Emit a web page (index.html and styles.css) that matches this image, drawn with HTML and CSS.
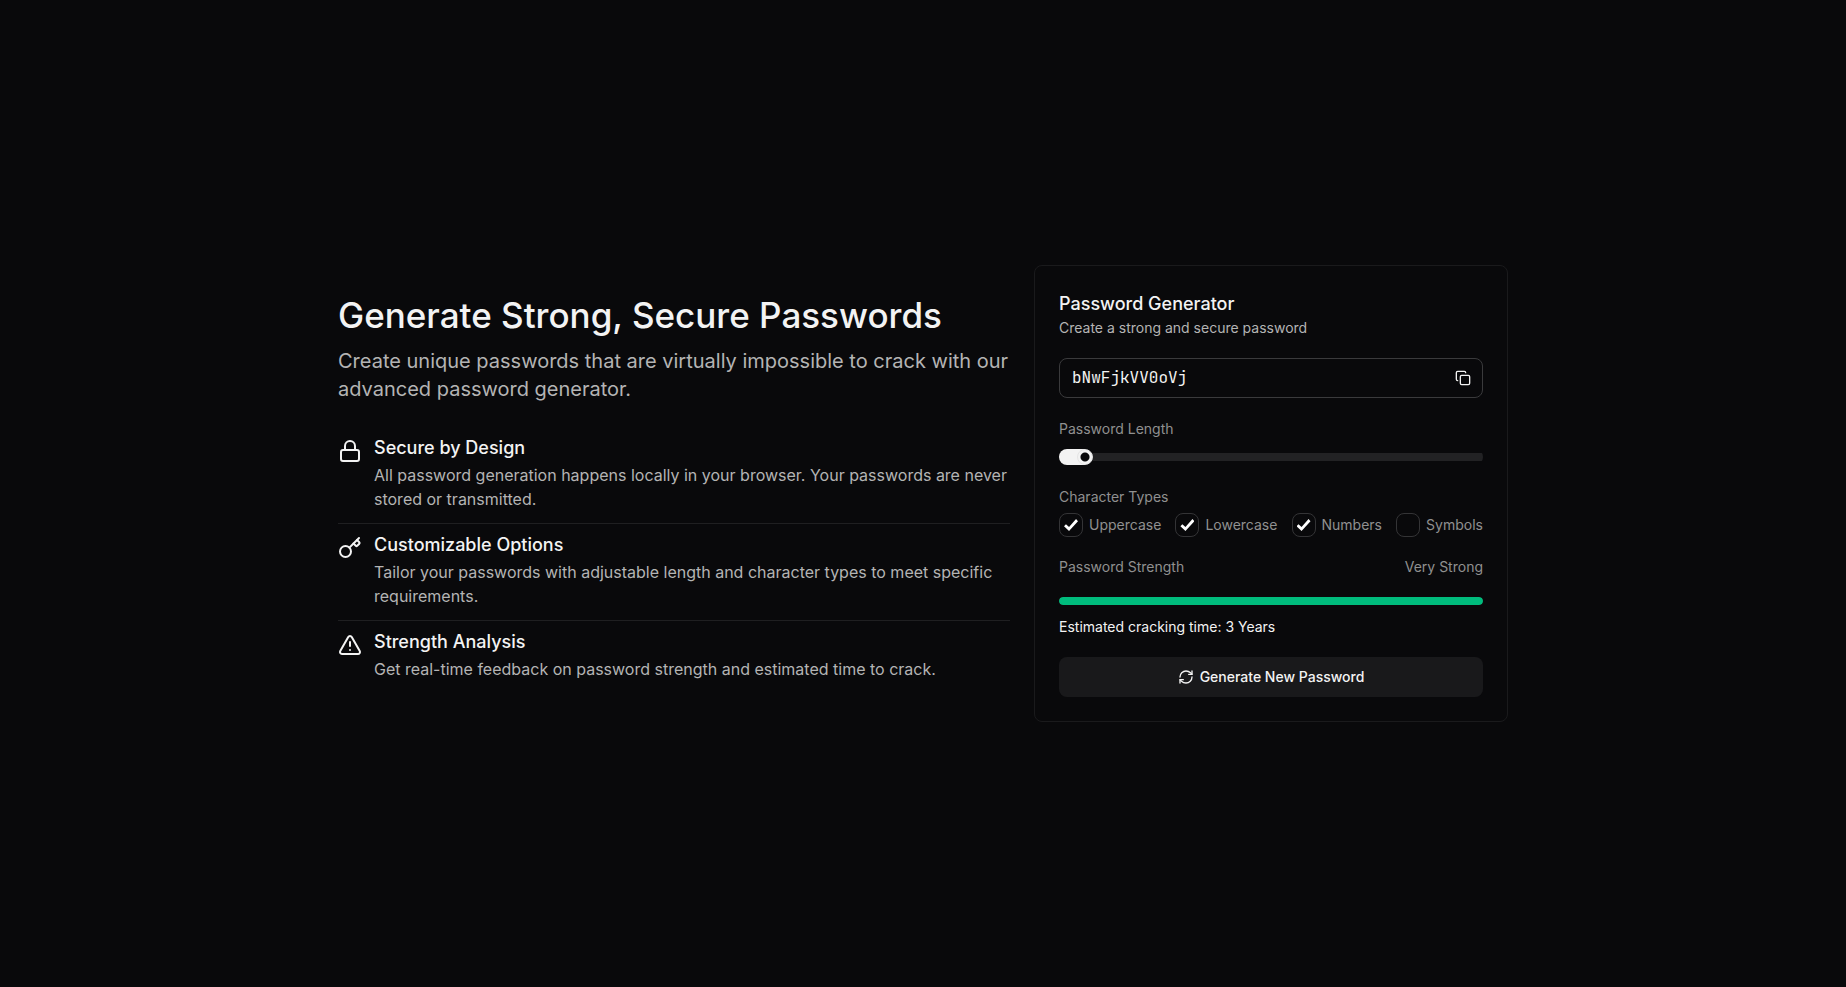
FILE: index.html
```html
<!DOCTYPE html>
<html lang="en">
<head>
<meta charset="utf-8">
<meta name="viewport" content="width=device-width, initial-scale=1">
<title>Password Generator</title>
<link rel="stylesheet" href="styles.css">
</head>
<body>
<main class="page">
  <section class="intro">
    <h1 class="intro-title">Generate Strong, Secure Passwords</h1>
    <p class="intro-text">Create unique passwords that are virtually impossible to crack with our advanced password generator.</p>
    <ul class="features">
      <li class="feature">
        <svg class="icon icon-lg" viewBox="0 0 24 24" aria-hidden="true"><rect width="18" height="11" x="3" y="11" rx="2"/><path d="M7 11V7a5 5 0 0 1 10 0v4"/></svg>
        <div class="feature-body">
          <h2 class="feature-title">Secure by Design</h2>
          <p class="feature-text">All password generation happens locally in your browser. Your passwords are never stored or transmitted.</p>
        </div>
      </li>
      <li class="feature">
        <svg class="icon icon-lg" viewBox="0 0 24 24" aria-hidden="true"><path d="m15.5 7.5 2.3 2.3a1 1 0 0 0 1.4 0l2.1-2.1a1 1 0 0 0 0-1.4L19 4"/><path d="m21 2-9.6 9.6"/><circle cx="7.5" cy="15.5" r="5.5"/></svg>
        <div class="feature-body">
          <h2 class="feature-title">Customizable Options</h2>
          <p class="feature-text">Tailor your passwords with adjustable length and character types to meet specific requirements.</p>
        </div>
      </li>
      <li class="feature">
        <svg class="icon icon-lg" viewBox="0 0 24 24" aria-hidden="true"><path d="m21.73 18-8-14a2 2 0 0 0-3.48 0l-8 14A2 2 0 0 0 4 21h16a2 2 0 0 0 1.73-3"/><path d="M12 9v4"/><path d="M12 17h.01"/></svg>
        <div class="feature-body">
          <h2 class="feature-title">Strength Analysis</h2>
          <p class="feature-text">Get real-time feedback on password strength and estimated time to crack.</p>
        </div>
      </li>
    </ul>
  </section>

  <section class="card" aria-labelledby="card-title">
    <header>
      <h2 class="card-title" id="card-title">Password Generator</h2>
      <p class="card-text">Create a strong and secure password</p>
    </header>
    <div class="output">
      <input class="output-value" type="text" value="bNwFjkVV0oVj" aria-label="Generated password" readonly>
      <button class="copy" type="button" aria-label="Copy password">
        <svg class="icon icon-sm" viewBox="0 0 24 24" aria-hidden="true"><rect width="14" height="14" x="8" y="8" rx="2"/><path d="M4 16c-1.100 0-2-.9-2-2V4c0-1.100.9-2 2-2h10c1.100 0 2 .9 2 2"/></svg>
      </button>
    </div>
    <div class="length">
      <label class="label" for="length">Password Length</label>
      <input class="slider" id="length" type="range" min="8" max="100" value="12">
    </div>
    <fieldset class="types">
      <legend class="label">Character Types</legend>
      <div class="checks">
        <label class="check"><input class="box" type="checkbox" checked>Uppercase</label>
        <label class="check"><input class="box" type="checkbox" checked>Lowercase</label>
        <label class="check"><input class="box" type="checkbox" checked>Numbers</label>
        <label class="check"><input class="box" type="checkbox">Symbols</label>
      </div>
    </fieldset>
    <div class="strength">
      <div class="strength-head"><span class="label">Password Strength</span><span class="label">Very Strong</span></div>
      <div class="meter" role="meter" aria-label="Password strength" aria-valuemin="0" aria-valuemax="100" aria-valuenow="100"><div class="meter-fill" style="width:100%"></div></div>
      <p class="estimate">Estimated cracking time: 3 Years</p>
    </div>
    <button class="generate" type="button">
      <svg class="icon icon-sm" viewBox="0 0 24 24" aria-hidden="true"><path d="M3 12a9 9 0 0 1 9-9 9.750 9.750 0 0 1 6.740 2.740L21 8"/><path d="M21 3v5h-5"/><path d="M21 12a9 9 0 0 1-9 9 9.750 9.750 0 0 1-6.740-2.740L3 16"/><path d="M8 16H3v5"/></svg>
      Generate New Password
    </button>
  </section>
</main>
</body>
</html>
```
FILE: styles.css
```css
*, *::before, *::after { box-sizing: border-box; }

body {
  margin: 0;
  background: #09090b;
  color: #f3f3f3;
  font-family: Inter, "Liberation Sans", sans-serif;
  font-size: 14px;
  line-height: 20px;
}

h1, h2, p, ul, fieldset { margin: 0; padding: 0; font-weight: 400; }
input, button { margin: 0; font: inherit; color: inherit; }

.page {
  min-height: 100vh;
  max-width: 1170px;
  margin: 0 auto;
  display: grid;
  grid-template-columns: minmax(0, 672fr) minmax(0, 474fr);
  column-gap: 24px;
  align-content: center;
  align-items: center;
}

.icon { flex: none; fill: none; stroke: currentColor; stroke-width: 2; stroke-linecap: round; stroke-linejoin: round; }
.icon-lg { width: 24px; height: 24px; }
.icon-sm { width: 16px; height: 16px; }

.intro-title { font-size: 35px; line-height: 40px; font-weight: 500; }
.intro-text { margin-top: 12px; font-size: 20px; line-height: 28px; color: #b4b4b4; }

.features { margin-top: 24px; list-style: none; }
.feature { display: flex; gap: 12px; padding: 12px 0; }
.feature + .feature { border-top: 1px solid #1f1f21; }
.feature-title { font-size: 18px; line-height: 18px; font-weight: 500; }
.feature-text { margin-top: 6px; font-size: 16px; line-height: 24px; color: #b4b4b4; }

.card {
  display: flex;
  flex-direction: column;
  gap: 20px;
  padding: 24px;
  border: 1px solid #1a1a1c;
  border-radius: 8px;
}
.card-title { font-size: 18px; line-height: 28px; font-weight: 500; }
.card-text { color: #b4b4b4; }

.output {
  display: flex;
  align-items: center;
  height: 40px;
  padding: 0 11px 0 12px;
  border: 1px solid #3a3a3c;
  border-radius: 8px;
}
.output-value {
  flex: 1;
  min-width: 0;
  padding: 0;
  border: 0;
  outline: 0;
  background: none;
  font-family: "JetBrains Mono", "Liberation Mono", monospace;
  font-size: 16px;
  line-height: 24px;
}
.copy { display: flex; padding: 0; border: 0; background: none; cursor: pointer; }

.label { padding: 0; color: #909090; }
.length { display: flex; flex-direction: column; gap: 10px; padding: 1px 0 2px; }

.slider {
  appearance: none;
  width: 100%;
  height: 16px;
  border-radius: 8px;
  background:
    linear-gradient(#f3f3f3, #f3f3f3) 0 0 / 26px 16px no-repeat,
    linear-gradient(#222224, #222224) 0 4px / 100% 8px no-repeat;
}
.slider::-webkit-slider-thumb {
  appearance: none;
  width: 16px;
  height: 16px;
  border: 1px solid #e4e4e4;
  border-radius: 50%;
  background: radial-gradient(circle, #09090b 4px, #f3f3f3 5px);
}

.types { min-width: 0; border: 0; }
.checks { display: flex; justify-content: space-between; padding-top: 6px; }
.check { display: flex; align-items: center; gap: 6px; color: #909090; }
.box {
  appearance: none;
  display: grid;
  place-items: center;
  width: 24px;
  height: 24px;
  border: 1px solid #343436;
  border-radius: 8px;
}
.box:checked::before {
  content: "";
  width: 14px;
  height: 12px;
  background: #fff;
  clip-path: polygon(14% 44%, 0 60%, 36% 100%, 100% 18%, 86% 0, 36% 66%);
}

.strength-head { display: flex; justify-content: space-between; }
.meter { margin-top: 20px; height: 8px; border-radius: 4px; background: #222224; overflow: hidden; }
.meter-fill { height: 100%; border-radius: 4px; background: #00bc7d; }
.estimate { margin-top: 12px; }

.generate {
  display: flex;
  align-items: center;
  justify-content: center;
  gap: 6px;
  height: 40px;
  border: 0;
  border-radius: 8px;
  background: #19191b;
  font-weight: 500;
  cursor: pointer;
}
```
